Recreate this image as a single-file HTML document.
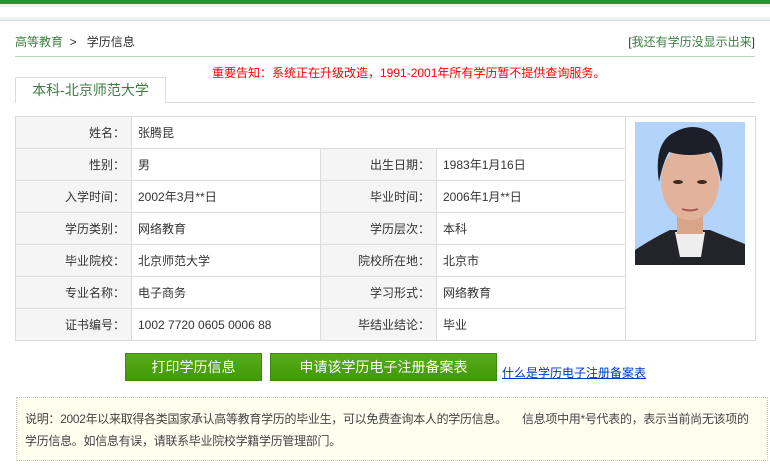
<!DOCTYPE html>
<html><head><meta charset="utf-8"><style>
*{margin:0;padding:0;box-sizing:border-box}
body{width:770px;height:471px;overflow:hidden;background:#fff;font-family:"Liberation Sans","Noto Sans CJK SC",sans-serif;font-size:12px;color:#333;position:relative}
.a{position:absolute}
table{border-collapse:collapse;position:absolute;left:15px;top:116px;width:741px}
td{border:1px solid #dcdcdc;height:32px;padding:0 6px;font-size:12px;color:#333}
td.l{background:#f5f5f5;text-align:right;width:116px}
td.v{width:189px}
.btn{position:absolute;top:353px;height:28px;background:linear-gradient(#5bab1a,#3f9a05);border:1px solid #3c8a0c;color:#fff;font-size:14px;text-align:center;line-height:26px}
</style></head><body>
<div class="a" style="left:0;top:0;width:770px;height:4px;background:#219632"></div>
<div class="a" style="left:0;top:4px;width:770px;height:3px;background:#e8f4ee"></div>
<div class="a" style="left:0;top:17px;width:770px;height:3px;background:#e8f4ee"></div>
<div class="a" style="left:0;top:20px;width:770px;height:1px;background:#d6dde8"></div>
<div class="a" style="left:15px;top:33px;font-size:12px;color:#3e7d42">高等教育 <span style="color:#333">&nbsp;&gt;&nbsp;&nbsp; 学历信息</span></div>
<div class="a" style="right:15px;top:33px;font-size:12px;color:#3e7d42"><span style="color:#333">[</span>我还有学历没显示出来<span style="color:#333">]</span></div>
<div class="a" style="left:15px;top:56px;width:740px;height:1px;background:#bcd9c0"></div>
<div class="a" style="left:212px;top:64px;font-size:12px;color:#f00">重要告知：系统正在升级改造，1991-2001年所有学历暂不提供查询服务。</div>
<div class="a" style="left:15px;top:102px;width:740px;height:1px;background:#d6dde8"></div>
<div class="a" style="left:15px;top:77px;width:151px;height:26px;border:1px solid #d6dde8;border-bottom:none;background:#fff;color:#3e7d42;font-size:14px;text-align:center;line-height:24px">本科-北京师范大学</div>
<table>
<tr><td class="l">姓名：</td><td colspan="3">张腾昆</td><td rowspan="7" style="width:130px;vertical-align:top;padding:5px 9px"></td></tr>
<tr><td class="l">性别：</td><td class="v">男</td><td class="l">出生日期：</td><td class="v">1983年1月16日</td></tr>
<tr><td class="l">入学时间：</td><td class="v">2002年3月**日</td><td class="l">毕业时间：</td><td class="v">2006年1月**日</td></tr>
<tr><td class="l">学历类别：</td><td class="v">网络教育</td><td class="l">学历层次：</td><td class="v">本科</td></tr>
<tr><td class="l">毕业院校：</td><td class="v">北京师范大学</td><td class="l">院校所在地：</td><td class="v">北京市</td></tr>
<tr><td class="l">专业名称：</td><td class="v">电子商务</td><td class="l">学习形式：</td><td class="v">网络教育</td></tr>
<tr><td class="l">证书编号：</td><td class="v">1002 7720 0605 0006 88</td><td class="l">毕结业结论：</td><td class="v">毕业</td></tr>
</table>
<svg class="a" style="left:635px;top:122px" width="110" height="143" viewBox="0 0 110 143">
<rect width="110" height="143" fill="#b2d4fa"/>
<path d="M0 143 L0 128 Q20 115 35 108 L75 108 Q92 115 110 122 L110 143Z" fill="#22242a"/>
<path d="M40 110 L70 110 L66 135 L45 135Z" fill="#eee"/>
<rect x="42" y="88" width="26" height="24" fill="#d9a58a"/>
<ellipse cx="55" cy="60" rx="29" ry="38" fill="#e2b39a"/>
<path d="M24 60 Q18 20 40 10 Q58 0 75 10 Q92 22 86 60 Q82 38 76 30 Q55 36 34 30 Q28 40 24 60Z" fill="#1c1f28"/>
<ellipse cx="43" cy="60" rx="5" ry="2" fill="#3a2a22"/><ellipse cx="67" cy="60" rx="5" ry="2" fill="#3a2a22"/>
<path d="M47 87 Q55 90 63 87" stroke="#a55" stroke-width="2" fill="none"/>
</svg>
<div class="btn" style="left:125px;width:137px">打印学历信息</div>
<div class="btn" style="left:270px;width:227px">申请该学历电子注册备案表</div>
<div class="a" style="left:502px;top:364px;font-size:12px;color:#0033cc;text-decoration:underline">什么是学历电子注册备案表</div>
<div class="a" style="left:16px;top:397px;width:752px;height:64px;background:#fffff0;border:1px dotted #c8c8c8;padding:10px 8px;font-size:12px;line-height:22px;color:#444;letter-spacing:-0.3px">说明：2002年以来取得各类国家承认高等教育学历的毕业生，可以免费查询本人的学历信息。&nbsp;&nbsp;&nbsp;&nbsp;&nbsp;信息项中用*号代表的，表示当前尚无该项的学历信息。如信息有误，请联系毕业院校学籍学历管理部门。</div>
</body></html>
